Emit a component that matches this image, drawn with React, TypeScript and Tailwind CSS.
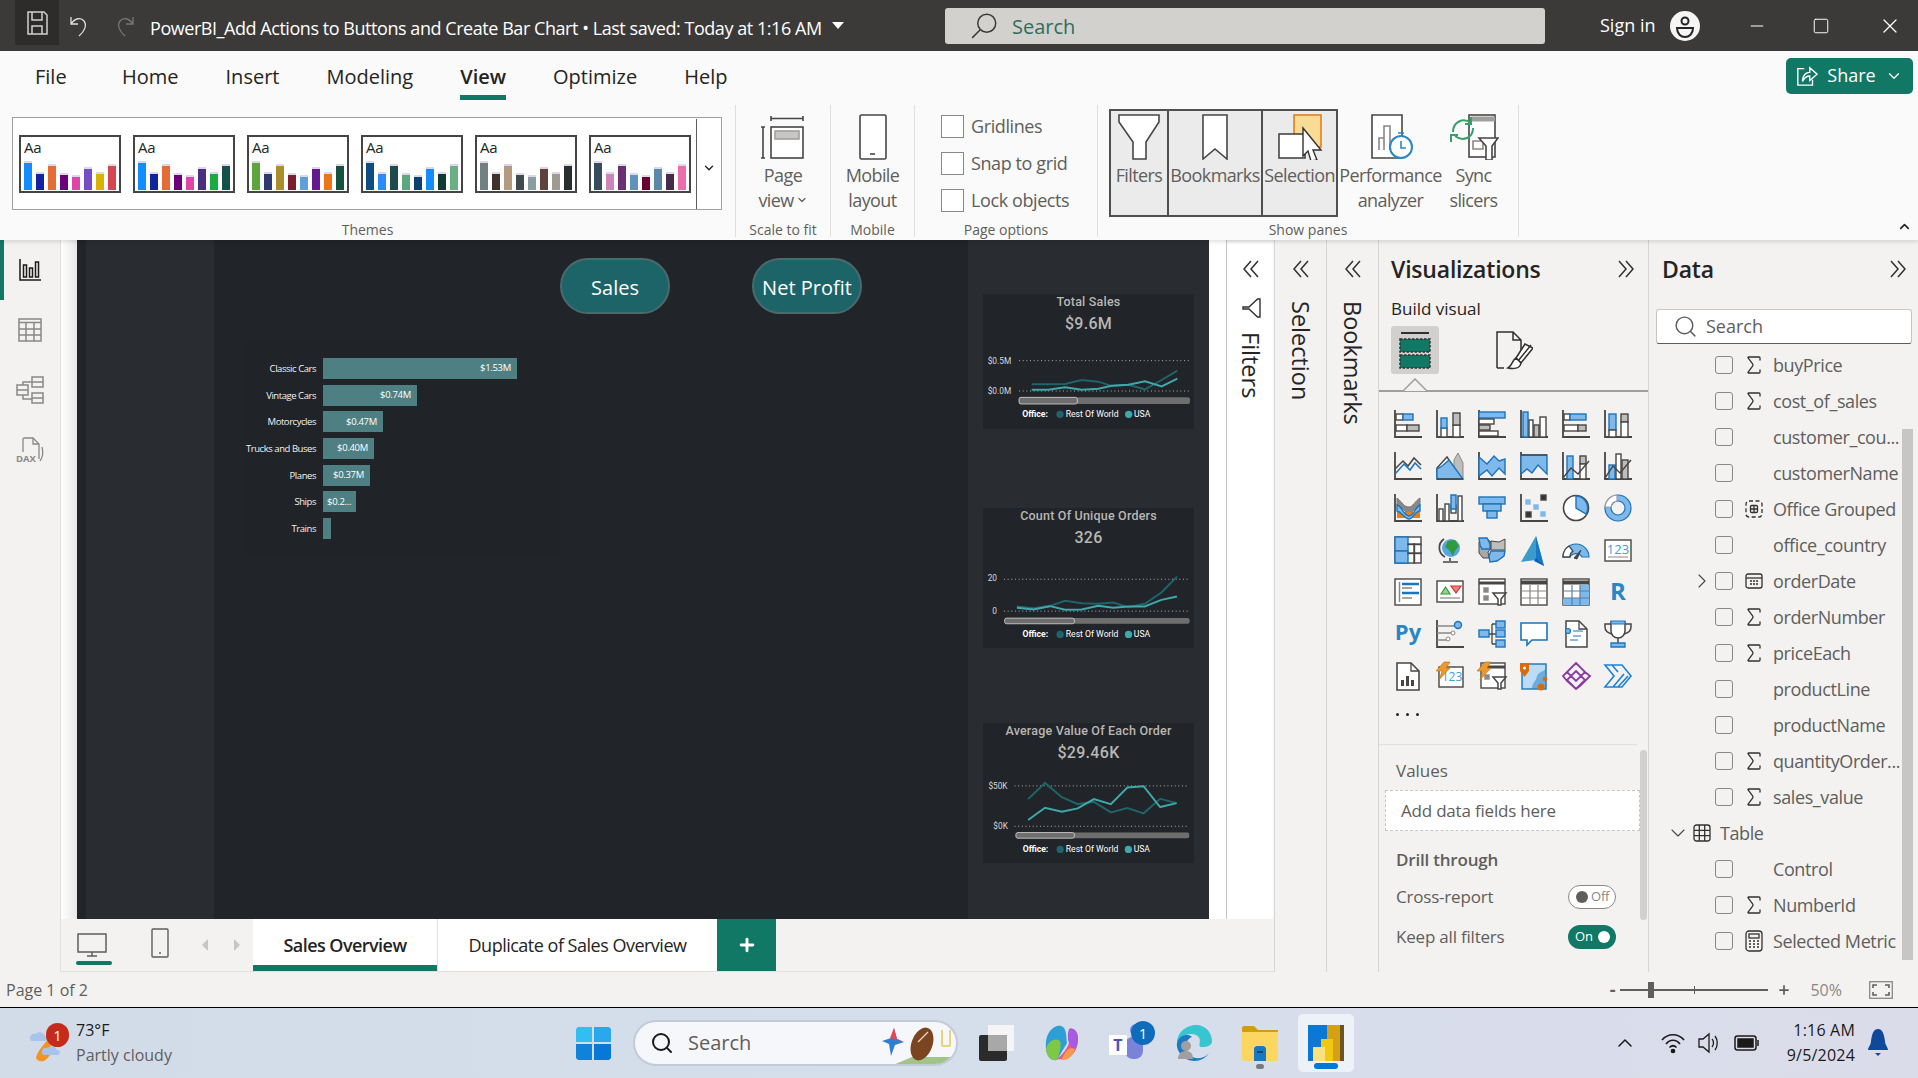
import React from 'react';
import { ChevronDown, ChevronUp, ChevronRight, Search, Plus, Minus, Square, X, Sigma } from 'lucide-react';

const D = '#484644';
const B = '#1b74bc';
const L = '#7fb8ea';
const G = '#bdbdbd';
const W = '#ffffff';

const themes = [
  ['#118dff', '#12239e', '#e66c37', '#6b007b', '#e044a7', '#744ec2', '#d9b300', '#d64550'],
  ['#118dff', '#12239e', '#e66c37', '#6b007b', '#e044a7', '#4a2f7f', '#1aab40', '#15504a'],
  ['#5ba63c', '#2f3a6e', '#ac8f2c', '#7a1f2e', '#5f9fd9', '#63188f', '#e8761c', '#16503f'],
  ['#0f4c81', '#2a8cff', '#1e4a4a', '#5aa880', '#0d3f72', '#118dff', '#113a32', '#6bb083'],
  ['#708083', '#40302e', '#b49a7f', '#414b4b', '#8a9ea2', '#60403a', '#a09b90', '#262e2e'],
  ['#374d5e', '#cc86b7', '#6b3072', '#5f93bd', '#6b0030', '#5c88a8', '#452a4a', '#ec6cae'],
];
const themeBars = [29, 18, 26, 17, 15, 23, 18, 26];

const r = (x: number, y: number, w: number, h: number, f: string, s: string = D) => (
  <rect x={x} y={y} width={w} height={h} fill={f} stroke={s} strokeWidth={1.4} />
);
const axis = <path d="M1 0V27H28" stroke={D} strokeWidth={1.8} fill="none" />;

// visualization gallery, row by row
const vizIcons: React.ReactNode[] = [
  <>{axis}{r(2, 4, 7, 6, W)}{r(9, 4, 10, 6, L, B)}{r(2, 15, 11, 6, W)}{r(13, 15, 12, 6, G)}</>,
  <>{axis}{r(5, 18, 6, 9, W)}{r(5, 8, 6, 10, L, B)}{r(17, 15, 7, 12, W)}{r(17, 3, 7, 12, G)}</>,
  <>{axis}{r(1, 2, 26, 6, L, B)}{r(1, 9, 15, 5, W)}{r(1, 15, 11, 5, G)}{r(1, 21, 19, 5, W)}</>,
  <>{axis}{r(3, 2, 5, 25, L, B)}{r(9, 10, 4, 17, W)}{r(14, 15, 5, 12, G)}{r(20, 7, 6, 20, W)}</>,
  <>{axis}{r(2, 4, 6, 6, W)}{r(8, 4, 16, 6, L, B)}{r(2, 15, 14, 6, W)}{r(16, 15, 8, 6, G)}</>,
  <>{axis}{r(5, 4, 7, 16, L, B)}{r(5, 20, 7, 7, W)}{r(17, 4, 7, 8, G)}{r(17, 12, 7, 15, W)}</>,

  <>{axis}<path d="M1 17L9 9L14 14L20 6L27 13" stroke={D} strokeWidth={1.5} fill="none" /><path d="M1 22L10 12L16 18L21 11L27 17" stroke={B} strokeWidth={1.5} fill="none" /></>,
  <><path d="M18 8L22 1L27 11V27H18Z" fill={G} stroke="#8a8886" strokeWidth={1} /><path d="M1 16L11 5L21 20V27H1Z" fill={W} stroke={D} strokeWidth={1.4} /><path d="M1 27V17L6 14L13 8L27 27Z" fill={L} stroke={B} strokeWidth={1.4} /><path d="M1 27H27" stroke={D} strokeWidth={1.6} /></>,
  <>{axis}<path d="M1 5L9 12L16 4L21 9L27 7V22L21 16L14 24L9 18L1 24Z" fill={L} stroke={B} strokeWidth={1.4} /></>,
  <>{axis}<path d="M1 3H27V22L18 13L12 21L7 17L1 22Z" fill={L} stroke={B} strokeWidth={1.4} /><path d="M1 3H27" stroke={D} strokeWidth={1.4} /></>,
  <>{axis}{r(5, 4, 6, 23, L, B)}{r(18, 4, 6, 8, G)}{r(18, 12, 6, 15, W)}<path d="M1 26L9 16L16 22L27 9" stroke={D} strokeWidth={1.4} fill="none" /></>,
  <>{axis}{r(5, 13, 6, 14, L, B)}{r(12, 2, 5, 25, W)}{r(18, 8, 6, 19, G)}<path d="M1 26L9 14L16 21L27 8" stroke={D} strokeWidth={1.4} fill="none" /></>,

  <>{axis}<path d="M3 4C9 9 10 13 15 13C19 13 21 7 26 4V11C21 13 19 19 15 19C10 19 9 12 3 11Z" fill="#8a8886" stroke="#777" strokeWidth={1} /><path d="M3 18H26V24H3Z" fill="#e3811c" /><path d="M3 11C8 12 10 22 15 22C20 22 21 13 26 11V17C21 17 19 25 15 25C10 25 8 18 3 17Z" fill={L} stroke={B} strokeWidth={1.4} /></>,
  <>{axis}{r(3, 15, 4, 12, W)}{r(9, 10, 4, 17, W)}{r(15, 11, 5, 8, W)}<path d="M15 1H20V15H15Z" fill={L} stroke={B} strokeWidth={1.4} />{r(22, 2, 4, 25, W)}</>,
  <>{r(1, 3, 26, 7, L, B)}{r(5, 10, 18, 7, L, B)}{r(9, 17, 10, 7, L, B)}</>,
  <>{axis}{r(6, 6, 4, 4, L, '#7fb8ea')}{r(21, 1, 5, 5, '#333')}{r(14, 11, 4, 4, L, '#7fb8ea')}{r(6, 18, 5, 5, '#333')}{r(21, 18, 4, 4, L, '#7fb8ea')}</>,
  <><circle cx={14} cy={14} r={12.5} fill={W} stroke={D} strokeWidth={1.6} /><path d="M14 2A12 12 0 0 1 24 20L14 14Z" fill={L} stroke={B} strokeWidth={1.4} /></>,
  <><circle cx={14} cy={14} r={10} fill="none" stroke={L} strokeWidth={6} /><circle cx={14} cy={14} r={13} fill="none" stroke={B} strokeWidth={1.2} /><circle cx={14} cy={14} r={7} fill="none" stroke={B} strokeWidth={1.2} /><path d="M1 13A13 13 0 0 1 13 1V7A7 7 0 0 0 7 13Z" fill={W} stroke="#a19f9d" strokeWidth={1.2} /></>,

  <>{r(1, 1, 26, 26, W, D)}{r(1, 1, 13, 14, L, B)}{r(1, 15, 13, 12, L, B)}{r(14, 8, 13, 0.5, W, D)}{r(20, 8, 0.5, 19, W, D)}{r(14, 17, 13, 0.5, W, D)}</>,
  <><circle cx={15} cy={12} r={9} fill="#5aa5e0" /><path d="M12 5L19 4L23 10L19 15L17 20L13 14L9 11Z" fill="#2e9b3e" /><path d="M8 3A10.5 10.5 0 0 0 9 21" stroke={D} strokeWidth={1.8} fill="none" /><path d="M14 22V25M7 26H22" stroke={D} strokeWidth={1.6} /></>,
  <><path d="M1 6L8 2L13 6L14 11L10 16L11 22L5 22L1 17Z" fill="#aaa8a6" stroke={D} strokeWidth={1} /><path d="M1 2H9L12 8L12 13L4 13L2 9Z" fill={L} stroke={B} strokeWidth={1.4} /><path d="M13 5L21 6L27 3V14L20 14L13 14Z" fill={G} stroke={D} strokeWidth={1} /><path d="M13 15H27L26 20L19 25L12 26L11 20Z" fill={L} stroke={B} strokeWidth={1.4} /></>,
  <><path d="M16 0L24 30L16 24L1 26Z" fill="#3b9ccc" /><path d="M16 0L24 30L16 24Z" fill="#1878c8" /><path d="M16 22L24 30L14 25Z" fill="#0d5fb0" /></>,
  <><path d="M1 21A13 13 0 0 1 27 21H20A7 7 0 0 0 8 21Z" fill={L} stroke={B} strokeWidth={1.2} /><path d="M1 21A13 13 0 0 1 7 10L11 15A7 7 0 0 0 8 21Z" fill={W} stroke={D} strokeWidth={1.3} /><path d="M12 22L19 14L15 23Z" fill={D} stroke={D} /></>,
  <>{r(1, 4, 26, 21, W, D)}<text x={14} y={18} textAnchor="middle" fontSize={13} fill="#3b9fe0" fontFamily="Open Sans, sans-serif">123</text><path d="M4 21H24" stroke="#8a8886" strokeWidth={1} /></>,

  <>{r(1, 1, 26, 26, W, D)}<path d="M5.5 4V24" stroke="#8a8886" strokeWidth={1.5} /><path d="M8 6H25M8 15H25" stroke={B} strokeWidth={2.4} /><path d="M8 10H18M8 20H18" stroke="#8a8886" strokeWidth={1.5} /></>,
  <>{r(1, 3, 26, 21, W, D)}<path d="M5 16L9.5 9L14 16Z" fill="#9ad08a" stroke="#2e9b3e" strokeWidth={1.2} /><path d="M15 8H25L20 15Z" fill="#f0817c" stroke="#d13438" strokeWidth={1.2} /><path d="M4 20H24" stroke="#8a8886" strokeWidth={1.2} /></>,
  <>{r(1, 1, 26, 25, W, D)}<path d="M1 5H27" stroke={D} strokeWidth={3} />{r(6, 10, 4, 4, '#8a8886', '#8a8886')}{r(6, 18, 4, 4, '#8a8886', '#8a8886')}<path d="M15 15H28L23 21V27H20V21Z" fill={W} stroke={D} strokeWidth={1.5} /></>,
  <>{r(1, 1, 26, 26, W, D)}<path d="M1 4.5H27" stroke={D} strokeWidth={4} /><path d="M10 7V27M18 7V27M1 13H27M1 20H27" stroke="#8a8886" strokeWidth={1.2} /></>,
  <>{r(1, 1, 26, 26, W, D)}<path d="M18 7H27V27H1V20H18Z" fill={L} /><path d="M1 4.5H27" stroke={D} strokeWidth={4} /><path d="M10 7V27M18 7V27M1 13H27M1 20H27" stroke="#5d7fa0" strokeWidth={1.2} /></>,
  <text x={14} y={22} textAnchor="middle" fontSize={24} fontWeight={700} fill="#2a86c5" fontFamily="Open Sans, sans-serif">R</text>,

  <text x={14} y={20} textAnchor="middle" fontSize={22} fontWeight={700} fill="#2a86c5" fontFamily="Open Sans, sans-serif">Py</text>,
  <>{axis}<path d="M1 6H20M1 13H16M1 20H12" stroke="#8a8886" strokeWidth={1.3} /><circle cx={22} cy={5} r={3.5} fill={L} stroke={B} strokeWidth={1.4} /><circle cx={17} cy={13} r={2} fill={W} stroke="#8a8886" /><circle cx={12} cy={19} r={2} fill={W} stroke="#8a8886" /></>,
  <><path d="M10 14H14M14 4V24M14 4H18M14 14H18M14 24H18" stroke={D} strokeWidth={1.3} />{r(1, 10, 10, 7, L, B)}{r(18, 1, 9, 7, L, B)}{r(18, 10, 9, 7, L, B)}{r(18, 20, 9, 7, L, B)}</>,
  <path d="M1 3H27V20H12L7 25V20H1Z" fill={W} stroke={B} strokeWidth={1.6} />,
  <><path d="M4 1H17L25 9V27H4Z" fill={W} stroke={D} strokeWidth={1.5} /><path d="M17 1V9H25" fill="none" stroke={D} strokeWidth={1.3} /><circle cx={6} cy={11} r={2.5} fill={L} stroke={B} strokeWidth={1.2} /><path d="M11 11H21M11 16H19M8 20H16" stroke={B} strokeWidth={1.1} /></>,
  <><path d="M7 2H21V11A7 7 0 0 1 7 11Z" fill={W} stroke={D} strokeWidth={1.5} /><path d="M7 4H1V7C1 11 4 13 8 14M21 4H27V7C27 11 24 13 20 14M14 18V23" stroke={D} strokeWidth={1.5} fill="none" /><path d="M7 1H21V4H7Z" fill={L} stroke={B} strokeWidth={1.2} /><path d="M7 23H21V27H7Z" fill={L} stroke={B} strokeWidth={1.3} /></>,

  <><path d="M3 1H17L25 9V28H3Z" fill={W} stroke={D} strokeWidth={1.6} /><path d="M17 1V9H25" fill="none" stroke={D} strokeWidth={1.3} /><path d="M7 24V18H10V24ZM12 24V14H15V24ZM17 24V18H20V24Z" fill={D} /></>,
  <>{r(3, 5, 24, 20, W, D)}<text x={16} y={19} textAnchor="middle" fontSize={12} fill="#3b9fe0" fontFamily="Open Sans, sans-serif">123</text><path d="M8 0H14L10 6H14L3 18L6 9H0Z" fill="#ed9a2c" stroke="#b86e12" strokeWidth={0.6} /></>,
  <>{r(3, 1, 24, 25, W, D)}<path d="M3 5H27" stroke={D} strokeWidth={3} />{r(7, 13, 4, 4, '#8a8886', '#8a8886')}<path d="M15 15H28L23 21V27H20V21Z" fill={W} stroke={D} strokeWidth={1.5} /><path d="M7 0H13L9 6H13L2 18L5 9H-1Z" fill="#ed9a2c" stroke="#b86e12" strokeWidth={0.6} /></>,
  <>{r(2, 2, 24, 25, '#bcdcf5', B)}<path d="M12 27C12 20 16 20 17 14C18 10 24 10 26 6V27Z" fill="#2a86c5" opacity={0.55} /><path d="M0 1H9V9L4.5 15L0 9Z" fill="#d96b0b" /><circle cx={4.5} cy={6} r={1.5} fill={W} /><circle cx={25} cy={17} r={2.3} fill="#d96b0b" /><circle cx={21} cy={25} r={3.5} fill="#d96b0b" /></>,
  <path d="M9 6L14 1L23 10L28 14L19 23L14 27L5 19L1 14ZM14 1L23 10L14 19L5 10ZM14 9L23 18L14 27L5 18Z" fill="none" stroke="#8a3aa3" strokeWidth={1.8} />,
  <path d="M1 3H18L27 14L18 25H1L10 14ZM9 25L20 12M14 25L24 14M8 3L14 10" fill="none" stroke="#1b82d8" strokeWidth={1.6} />,
];

const fields: { name: string; icon?: 'sum' | 'group' | 'date' | 'calc'; expand?: boolean }[] = [
  { name: 'buyPrice', icon: 'sum' },
  { name: 'cost_of_sales', icon: 'sum' },
  { name: 'customer_cou...' },
  { name: 'customerName' },
  { name: 'Office Grouped', icon: 'group' },
  { name: 'office_country' },
  { name: 'orderDate', icon: 'date', expand: true },
  { name: 'orderNumber', icon: 'sum' },
  { name: 'priceEach', icon: 'sum' },
  { name: 'productLine' },
  { name: 'productName' },
  { name: 'quantityOrder...', icon: 'sum' },
  { name: 'sales_value', icon: 'sum' },
];
const tableFields: { name: string; icon?: 'sum' | 'calc' }[] = [
  { name: 'Control' },
  { name: 'NumberId', icon: 'sum' },
  { name: 'Selected Metric', icon: 'calc' },
];

const bars = [
  { label: 'Classic Cars', value: '$1.53M', w: 194 },
  { label: 'Vintage Cars', value: '$0.74M', w: 94 },
  { label: 'Motorcycles', value: '$0.47M', w: 60 },
  { label: 'Trucks and Buses', value: '$0.40M', w: 51 },
  { label: 'Planes', value: '$0.37M', w: 47 },
  { label: 'Ships', value: '$0.2...', w: 33 },
  { label: 'Trains', value: '', w: 8 },
];

const DoubleChevron = ({ left, className = '' }: { left?: boolean; className?: string }) => (
  <svg viewBox="0 0 20 20" className={`h-5 w-5 ${className}`} fill="none" stroke="#323130" strokeWidth={1.5}>
    <path d={left ? 'M10 2L3 10L10 18M17 2L10 10L17 18' : 'M3 2L10 10L3 18M10 2L17 10L10 18'} />
  </svg>
);

const ThemeThumb = ({ colors }: { colors: string[] }) => (
  <div className="flex h-[58px] w-[102px] flex-col border-2 border-[#454545] bg-white pl-[3px]">
    <div className="h-[20px] text-[15px] leading-[20px] tracking-[-0.2px] text-[#252423]">Aa</div>
    <div className="flex h-[33px] items-end gap-[4px]">
      {colors.map((c, i) => (
        <div
          key={i}
          className="w-[8px] border-t-2 border-t-[#dcd8ec]"
          style={{ backgroundColor: c, height: themeBars[i] }}
        />
      ))}
    </div>
  </div>
);

const Sep = () => <div className="h-[132px] w-px shrink-0 bg-[#e1dfdd]" />;

const Group = ({ label, width, children }: { label: string; width: string; children: React.ReactNode }) => (
  <div className={`flex h-[135px] shrink-0 flex-col ${width}`}>
    <div className="h-[115px]">{children}</div>
    <div className="h-[20px] text-center text-[14px] leading-[20px] text-[#605e5c]">{label}</div>
  </div>
);

const PageCheck = ({ label }: { label: string }) => (
  <div className="flex h-[22px] items-center gap-[7px]">
    <div className="h-[23px] w-[23px] border border-[#8a8886] bg-white" />
    <span className="text-[18px] tracking-[-0.4px] text-[#605e5c]">{label}</span>
  </div>
);

const PaneLabel = ({ lines }: { lines: string[] }) => (
  <div className="mt-[3px] text-center text-[18px] leading-[24.5px] tracking-[-0.6px] text-[#605e5c]">
    {lines.map((l) => (
      <div key={l} className="whitespace-nowrap">
        {l}
      </div>
    ))}
  </div>
);

const PaneToggle = ({ width, label, children }: { width: string; label: string; children: React.ReactNode }) => (
  <div className={`flex h-[108px] flex-col items-center border-2 border-[#505050] bg-[#ebebeb] pt-[3px] ${width} -ml-[2px] first:ml-0`}>
    <div className="h-[46px]">{children}</div>
    <PaneLabel lines={[label]} />
  </div>
);

const Spark = ({
  viewBox,
  height,
  grid,
  labels,
  dark,
  light,
  bar,
  legendY,
}: {
  viewBox: string;
  height: number;
  grid: [number, number, number];
  labels: [string, number, number][];
  dark: string;
  light: string;
  bar: [number, number, number, number];
  legendY: number;
}) => (
  <svg viewBox={viewBox} width={211} height={height} className="block" fontFamily="Roboto, sans-serif">
    <path
      d={`M${grid[0]} ${grid[1]}H660M${grid[0]} ${grid[2]}H660`}
      stroke="#b3b0ad"
      strokeWidth={3}
      strokeDasharray="3 8"
    />
    {labels.map(([t, x, y]) => (
      <text key={t} x={x} y={y + 9} fontSize={25} fill="#d9d9d9">
        {t}
      </text>
    ))}
    <polyline points={dark} fill="none" stroke="#1f6468" strokeWidth={6} />
    <polyline points={light} fill="none" stroke="#3fa8ab" strokeWidth={6} />
    <rect x={bar[0]} y={bar[1]} width={660 - bar[0]} height={bar[2]} rx={6} fill="#6e6e6e" />
    <rect x={bar[0]} y={bar[1]} width={bar[3] - bar[0]} height={bar[2]} rx={6} fill="#6e6e6e" stroke="#d2d0ce" strokeWidth={2.5} />
    <text x={157} y={legendY + 9} fontSize={26} fontWeight={700} fill="#ffffff">
      Office:
    </text>
    <circle cx={270} cy={legendY} r={11} fill="#1f6468" />
    <text x={287} y={legendY + 9} fontSize={26} fill="#ffffff">
      Rest Of World
    </text>
    <circle cx={476} cy={legendY} r={11} fill="#3fa8ab" />
    <text x={492} y={legendY + 9} fontSize={26} fill="#ffffff">
      USA
    </text>
  </svg>
);

const KpiCard = ({ title, value, children, h }: { title: string; value: string; children: React.ReactNode; h: string }) => (
  <div className={`w-[211px] bg-[#212429] font-['Roboto',sans-serif] ${h}`}>
    <div className="h-[50px] text-center font-medium text-[#b9b6b3]">
      <div className="text-[12.5px] leading-[16px] tracking-[0.2px]">{title}</div>
      <div className="mt-[3px] text-[16px] leading-[22px] tracking-[0.3px]">{value}</div>
    </div>
    {children}
  </div>
);

const Toggle = ({ on }: { on?: boolean }) =>
  on ? (
    <div className="flex h-[24px] w-[48px] items-center justify-between rounded-full bg-[#117865] pl-[7px] pr-[6px] text-[13px] text-white">
      On
      <div className="h-[12px] w-[12px] rounded-full bg-white" />
    </div>
  ) : (
    <div className="flex h-[24px] w-[48px] items-center gap-[3px] rounded-full border border-[#8a8886] bg-white pl-[7px] text-[13px] text-[#8a8886]">
      <div className="h-[12px] w-[12px] rounded-full bg-[#605e5c]" />
      Off
    </div>
  );

const FieldIcon = ({ icon }: { icon?: string }) => {
  if (icon === 'sum') return <Sigma className="h-[24px] w-[24px] shrink-0" color="#323130" strokeWidth={1.3} />;
  if (icon === 'group')
    return (
      <svg viewBox="0 0 18 18" className="h-[18px] w-[18px]" fill="none" stroke="#323130" strokeWidth={1.3}>
        <rect x={1} y={1} width={16} height={16} rx={3} strokeDasharray="4 2.5" />
        <rect x={5.5} y={5.5} width={7} height={7} rx={1.2} />
        <path d="M9 5.5V12.5M5.5 9H12.5" />
      </svg>
    );
  if (icon === 'date')
    return (
      <svg viewBox="0 0 18 18" className="h-[18px] w-[18px]" fill="none" stroke="#323130" strokeWidth={1.3}>
        <rect x={1} y={2} width={16} height={14} rx={2} />
        <path d="M1 6H17" />
        <path d="M5 9H7M8 9H10M11 9H13M5 12H7M8 12H10M11 12H13" strokeWidth={1.5} />
      </svg>
    );
  if (icon === 'calc')
    return (
      <svg viewBox="0 0 18 22" className="h-[22px] w-[18px]" fill="none" stroke="#323130" strokeWidth={1.3}>
        <rect x={1} y={1} width={16} height={20} rx={3} />
        <rect x={4} y={4} width={10} height={4} />
        <path d="M4 11H6M8 11H10M12 11H14M4 14H6M8 14H10M12 14H14M4 17H6M8 17H10M12 17H14" strokeWidth={1.6} />
      </svg>
    );
  return null;
};

const FieldRow = ({ name, icon, expand }: { name: string; icon?: string; expand?: boolean }) => (
  <div className="flex h-[36px] items-center">
    <div className="flex w-[66px] justify-end pr-[1px]">
      {expand && <ChevronRight className="h-[24px] w-[24px]" color="#484644" strokeWidth={1.1} />}
    </div>
    <div className="h-[18px] w-[18px] rounded-[3px] border border-[#8a8886]" />
    <div className="ml-[12px] flex w-[18px] justify-center">
      <FieldIcon icon={icon} />
    </div>
    <span className="ml-[10px] whitespace-nowrap text-[18px] tracking-[-0.4px] text-[#605e5c]">{name}</span>
  </div>
);

export default function App() {
  return (
    <div className="flex h-[1078px] w-[1918px] flex-col overflow-hidden bg-white font-['Open_Sans',sans-serif]">
      {/* Title bar */}
      <div className="flex h-[51px] shrink-0 items-center bg-[#3b3a39] text-white">
        <div className="flex w-[945px] items-center">
          <div className="ml-[15px] flex h-[45px] w-[44px] -translate-y-[3px] items-center justify-center bg-[#2d2c2b]">
            <svg viewBox="0 0 22 24" className="h-[24px] w-[22px]" fill="none" stroke="#d2d0ce" strokeWidth={1.5}>
              <path d="M2 1H18L21 4V23H2Z" />
              <path d="M6 1V9H16V1M6 23V15H16V23" />
            </svg>
          </div>
          <svg viewBox="0 0 22 24" className="ml-[10px] h-[24px] w-[22px]" fill="none" stroke="#e1dfdd" strokeWidth={1.3}>
            <path d="M2 3V10H9M2 10C6 4 12 3 15 7C18 11 16 17 10 22" />
          </svg>
          <svg viewBox="0 0 22 24" className="ml-[22px] h-[24px] w-[22px]" fill="none" stroke="#797775" strokeWidth={1.3}>
            <path d="M20 3V10H13M20 10C16 4 10 3 7 7C4 11 6 17 12 22" />
          </svg>
          <span className="ml-[15px] translate-y-[3px] whitespace-nowrap text-[18px] tracking-[-0.45px]">
            PowerBI_Add Actions to Buttons and Create Bar Chart • Last saved: Today at 1:16 AM
          </span>
          <div className="ml-[10px] h-0 w-0 border-x-[6px] border-t-[7px] border-x-transparent border-t-white" />
        </div>
        <div className="flex h-[36px] w-[600px] items-center rounded-[3px] bg-[#d2d1ce] pl-[26px]">
          <svg viewBox="0 0 24 24" className="h-[27px] w-[27px]" fill="none" stroke="#3b3a39" strokeWidth={1.3}>
            <circle cx={14} cy={10} r={8} />
            <path d="M8 16L1 23" />
          </svg>
          <span className="ml-[14px] translate-y-[1px] text-[20px] text-[#2f6d60]">Search</span>
        </div>
        <span className="ml-[55px] whitespace-nowrap text-[18px]">Sign in</span>
        <svg viewBox="0 0 30 30" className="ml-[14px] h-[30px] w-[30px]">
          <circle cx={15} cy={15} r={15} fill="#f5f5f5" />
          <circle cx={15} cy={10} r={3.5} fill="none" stroke="#252423" strokeWidth={2} />
          <path d="M7 17H23C23 23 19 26 15 26C11 26 7 23 7 17Z" fill="none" stroke="#252423" strokeWidth={2} />
        </svg>
        <Minus className="ml-[47px] h-[20px] w-[20px]" strokeWidth={1.3} />
        <Square className="ml-[45px] h-[18px] w-[18px]" strokeWidth={1.3} />
        <X className="ml-[48px] h-[24px] w-[24px]" strokeWidth={1.3} />
      </div>

      {/* Ribbon */}
      <div className="relative z-10 h-[189px] shrink-0 bg-[#fafafa] shadow-[0_2px_4px_rgba(0,0,0,0.12)]">
        <div className="flex h-[54px] items-center pb-[3px] pl-[35px] text-[20px] text-[#252423]">
          <span className="w-[87px]">File</span>
          <div className="flex gap-[47px]">
            {['Home', 'Insert', 'Modeling', 'View', 'Optimize', 'Help'].map((t) =>
              t === 'View' ? (
                <span key={t} className="relative font-semibold">
                  {t}
                  <span className="absolute -bottom-[8px] left-0 h-[5px] w-full bg-[#117865]" />
                </span>
              ) : (
                <span key={t}>{t}</span>
              ),
            )}
          </div>
          <button
            type="button"
            className="ml-auto mr-[5px] flex h-[36px] w-[127px] -translate-y-[1px] items-center justify-center gap-[9px] rounded-[5px] bg-[#117865] text-[18px] text-white"
          >
            <svg viewBox="0 0 24 24" className="h-[22px] w-[22px]" fill="none" stroke="#fff" strokeWidth={1.5}>
              <path d="M9 4H2V22H18V16" />
              <path d="M7 18C7 11 11 8 15 8V3L23 10L15 17V12C11 12 9 14 7 18Z" />
            </svg>
            Share
            <ChevronDown className="h-[18px] w-[18px]" strokeWidth={1.6} />
          </button>
        </div>

        <div className="flex items-start">
          <Group label="Themes" width="w-[735px]">
            <div className="ml-[12px] mt-[12px] flex h-[93px] w-[710px] items-center border border-[#a19f9d] bg-white pl-[6px]">
              <div className="flex gap-[12px]">
                {themes.map((t, i) => (
                  <ThemeThumb key={i} colors={t} />
                ))}
              </div>
              <div className="ml-[5px] h-[90px] w-px bg-[#605e5c]" />
              <div className="flex flex-1 justify-center pt-[8px]">
                <ChevronDown className="h-[14px] w-[14px]" color="#252423" strokeWidth={2.4} />
              </div>
            </div>
          </Group>
          <Sep />
          <Group label="Scale to fit" width="w-[94px]">
            <div className="flex flex-col items-center pt-[9px]">
              <svg viewBox="0 0 46 46" className="h-[46px] w-[46px]" fill="none" stroke="#484644" strokeWidth={1.6}>
                <path d="M11 2V7M43 2V7M11 4.5H43M1 13H5M1 44H5M3 13V44" />
                <rect x={11} y={13} width={32} height={31} fill="#fff" />
                <rect x={15} y={17} width={24} height={8} fill="#c8c6c4" stroke="#a19f9d" />
              </svg>
              <PaneLabel lines={['Page']} />
              <div className="flex items-center gap-[2px] text-[18px] leading-[24.5px] tracking-[-0.6px] text-[#605e5c]">
                view
                <ChevronDown className="h-[12px] w-[12px]" strokeWidth={2.4} />
              </div>
            </div>
          </Group>
          <Sep />
          <Group label="Mobile" width="w-[83px]">
            <div className="flex flex-col items-center pt-[9px]">
              <svg viewBox="0 0 46 46" className="h-[46px] w-[46px]" fill="none" stroke="#484644" strokeWidth={1.6}>
                <rect x={10} y={1} width={26} height={44} rx={1.5} fill="#fff" />
                <path d="M20 40H25" />
              </svg>
              <PaneLabel lines={['Mobile', 'layout']} />
            </div>
          </Group>
          <Sep />
          <Group label="Page options" width="w-[182px]">
            <div className="flex flex-col gap-[15px] pl-[26px] pt-[10px]">
              <PageCheck label="Gridlines" />
              <PageCheck label="Snap to grid" />
              <PageCheck label="Lock objects" />
            </div>
          </Group>
          <Sep />
          <Group label="Show panes" width="w-[420px]">
            <div className="flex pl-[11px] pt-[4px]">
              <PaneToggle width="w-[60px]" label="Filters">
                <svg viewBox="0 0 42 46" className="h-[46px] w-[42px]" fill="none" stroke="#484644" strokeWidth={1.6}>
                  <path d="M1 1H41V8L28 28V45H15V28L1 8Z" fill="#fff" />
                </svg>
              </PaneToggle>
              <PaneToggle width="w-[96px]" label="Bookmarks">
                <svg viewBox="0 0 28 46" className="h-[46px] w-[28px]" fill="none" stroke="#484644" strokeWidth={1.6}>
                  <path d="M2 1H26V45L14 35L2 45Z" fill="#fff" />
                </svg>
              </PaneToggle>
              <PaneToggle width="w-[77px]" label="Selection">
                <svg viewBox="0 0 46 46" className="h-[46px] w-[46px]" fill="none" stroke="#484644" strokeWidth={1.6}>
                  <rect x={17} y={1} width={27} height={32} fill="#f8dc95" stroke="#e3811c" />
                  <rect x={2} y={20} width={26} height={24} fill="#fff" />
                  <path d="M26 14L44 36H36L40 46L34 47L31 37L26 42Z" fill="#fff" stroke="#323130" strokeWidth={1.4} />
                </svg>
              </PaneToggle>
              <div className="flex w-[105px] flex-col items-center pt-[5px]">
                <svg viewBox="0 0 46 46" className="h-[46px] w-[46px]" fill="none" stroke="#484644" strokeWidth={1.6}>
                  <path d="M4 1H34V44H4Z" fill="#fff" />
                  <path d="M11 36V24H16V36M16 36V12H22V36" stroke="#8a8886" />
                  <circle cx={33} cy={33} r={11} fill="#fff" stroke="#2a86c5" strokeWidth={2} />
                  <path d="M33 27V34H38M30 19H36" stroke="#2a86c5" strokeWidth={1.6} />
                </svg>
                <PaneLabel lines={['Performance', 'analyzer']} />
              </div>
              <div className="flex w-[61px] flex-col items-center pt-[5px]">
                <svg viewBox="0 0 50 46" className="h-[46px] w-[50px]" fill="none" stroke="#484644" strokeWidth={1.6}>
                  <rect x={20} y={1} width={26} height={42} fill="#fff" />
                  <path d="M22 5H46" stroke="#a19f9d" strokeWidth={5} />
                  <path d="M24 27H34V35H24Z" stroke="#8a8886" />
                  <path d="M4 18C4 8 14 3 22 9M24 14C24 24 14 28 6 22M22 3V10H16M2 28V21H9" stroke="#38a169" strokeWidth={2} />
                  <path d="M30 24H49L43 32V46H37V32Z" fill="#fff" />
                </svg>
                <PaneLabel lines={['Sync', 'slicers']} />
              </div>
            </div>
          </Group>
          <Sep />
        </div>
        <ChevronUp className="absolute bottom-[6px] right-[6px] h-[15px] w-[15px]" color="#252423" strokeWidth={2.6} />
      </div>

      {/* Main */}
      <div className="flex h-[732px] shrink-0 bg-[#f3f2f1]">
        {/* Left nav */}
        <div className="flex w-[61px] shrink-0 flex-col border-r border-[#e1dfdd]">
          <div className="flex h-[60px] items-center justify-center border-l-4 border-[#117865] pr-[4px]">
            <svg viewBox="0 0 22 22" className="h-[22px] w-[22px]" fill="none" stroke="#1b1a19" strokeWidth={1.5}>
              <path d="M1 0V21H22" />
              <rect x={4.5} y={6} width={3} height={12} />
              <rect x={10.5} y={9} width={3} height={9} />
              <rect x={16.5} y={3} width={3} height={15} />
            </svg>
          </div>
          <div className="flex h-[60px] items-center justify-center">
            <svg viewBox="0 0 24 24" className="h-[24px] w-[24px]" fill="none" stroke="#8a8886" strokeWidth={1.5}>
              <rect x={1} y={1} width={22} height={22} />
              <path d="M1 4.5H23M1 11H23M1 17H23M8 4.5V23M16 4.5V23" />
            </svg>
          </div>
          <div className="flex h-[60px] items-center justify-center">
            <svg viewBox="0 0 28 28" className="h-[28px] w-[28px]" fill="none" stroke="#8a8886" strokeWidth={1.5}>
              <rect x={1} y={9} width={11} height={10} />
              <path d="M1 14H12M12 6H16M12 23H16M7 9V6H16M7 19V23H16" />
              <rect x={16} y={1} width={11} height={10} />
              <path d="M16 6H27M16 22H27" />
              <rect x={16} y={17} width={11} height={10} />
            </svg>
          </div>
          <div className="flex h-[60px] items-center justify-center">
            <svg viewBox="0 0 28 26" className="h-[26px] w-[28px] overflow-visible" fill="none" stroke="#8a8886" strokeWidth={1.3}>
              <path d="M7 15V2C7 1 8 1 9 1H17L23 7V22" />
              <path d="M17 1V7H23M26 10C27 14 27 20 24 24" />
              <text x={0} y={25} fontSize={9.5} fontWeight={700} fill="#8a8886" stroke="none" fontFamily="Open Sans, sans-serif">
                DAX
              </text>
            </svg>
          </div>
        </div>

        {/* Report area + page tabs */}
        <div className="flex w-[1213px] shrink-0 flex-col">
          <div className="flex h-[679px] bg-white shadow-[inset_0_2px_3px_rgba(0,0,0,0.08)]">
            <div className="w-[16px] shrink-0 bg-linear-to-l from-[#e8e8e8] to-white" />
            <div className="flex w-[1132px] shrink-0 bg-[#212529]">
              <div className="w-[9px] shrink-0" />
              <div className="w-[128px] shrink-0 bg-[#292c31]" />
              <div className="w-[754px] shrink-0">
                <div className="ml-[346px] mt-[18px] flex gap-[82px]">
                  <div className="flex h-[56px] w-[110px] items-center justify-center rounded-full border-2 border-[#4b6a6d] bg-[#1c6468] pt-[3px] text-[20px] text-white">
                    Sales
                  </div>
                  <div className="flex h-[56px] w-[110px] items-center justify-center rounded-full border-2 border-[#4b6a6d] bg-[#1c6468] pt-[3px] text-[20px] text-white">
                    Net Profit
                  </div>
                </div>
                {/* Bar chart */}
                <div className="ml-[31px] mt-[26px] flex h-[215px] w-[316px] flex-col gap-[5.67px] bg-[#202327] pt-[18px]">
                  {bars.map((b) => (
                    <div key={b.label} className="flex h-[21px] items-center">
                      <div className="w-[71px] whitespace-nowrap pt-px text-right text-[9.5px] tracking-[-0.45px] text-[#f3f2f1]">{b.label}</div>
                      <div
                        className={`ml-[7px] flex h-[21px] items-center overflow-hidden bg-[#4e7f82] text-[9.5px] tracking-[-0.3px] text-white ${
                          b.value === '$0.2...' ? 'justify-start pl-[4px]' : 'justify-end pr-[6px]'
                        }`}
                        style={{ width: b.w }}
                      >
                        {b.value}
                      </div>
                    </div>
                  ))}
                </div>
              </div>
              <div className="w-[241px] shrink-0 bg-[#292c31] pl-[15px] pt-[54px]">
                <KpiCard title="Total Sales" value="$9.6M" h="h-[135px]">
                  <Spark
                    viewBox="39 192 633 255"
                    height={85}
                    grid={[147, 242, 333]}
                    labels={[
                      ['$0.5M', 53, 242],
                      ['$0.0M', 53, 333],
                    ]}
                    dark="185,313 235,313 285,312 335,300 385,305 425,318 475,314 525,328 575,300 622,272"
                    light="185,329 235,329 285,322 335,329 385,326 425,317 475,314 525,304 575,319 622,296"
                    bar={[147, 352, 20, 322]}
                    legendY={403}
                  />
                </KpiCard>
                <div className="mt-[79px]">
                  <KpiCard title="Count Of Unique Orders" value="326" h="h-[140px]">
                    <Spark
                      viewBox="39 834 633 271"
                      height={90}
                      grid={[101, 898, 994]}
                      labels={[
                        ['20', 52, 895],
                        ['0', 66, 994],
                      ]}
                      dark="140,980 190,985 240,978 285,963 335,970 385,972 430,968 475,982 525,972 575,938 622,890"
                      light="140,984 190,989 240,979 285,990 335,989 385,978 430,984 475,980 525,980 575,960 622,950"
                      bar={[103, 1015, 17, 313]}
                      legendY={1064}
                    />
                  </KpiCard>
                </div>
                <div className="mt-[75px]">
                  <KpiCard title="Average Value Of Each Order" value="$29.46K" h="h-[140px]">
                    <Spark
                      viewBox="39 218 633 272"
                      height={90}
                      grid={[132, 257, 379]}
                      labels={[
                        ['$50K', 53, 257],
                        ['$0K', 68, 377],
                      ]}
                      dark="173,297 224,248 275,291 323,312 372,305 423,337 473,324 522,340 572,296 622,309"
                      light="173,360 224,323 275,335 323,325 372,297 423,312 473,262 522,258 572,321 622,309"
                      bar={[136, 398, 17, 313]}
                      legendY={449}
                    />
                  </KpiCard>
                </div>
              </div>
            </div>
            <div className="w-[17px] shrink-0 bg-white" />
            {/* Filters pane, collapsed */}
            <div className="flex w-[48px] shrink-0 flex-col items-center border-l border-[#c8c6c4] pt-[19px]">
              <DoubleChevron left />
              <svg viewBox="0 0 20 20" className="mt-[19px] h-[20px] w-[20px]" fill="none" stroke="#323130" strokeWidth={1.4}>
                <path d="M19 1V19H16.5L8 11H2V9H8L16.5 1Z" />
              </svg>
              <div className="mt-[14px] text-[23.5px] font-medium leading-none text-[#252423] [writing-mode:vertical-rl]">Filters</div>
            </div>
          </div>

          {/* Page tabs */}
          <div className="flex h-[53px] items-stretch border-b border-[#e1dfdd]">
            <div className="relative flex w-[192px] items-center">
              <svg viewBox="0 0 30 24" className="ml-[16px] h-[24px] w-[30px]" fill="none" stroke="#605e5c" strokeWidth={1.5}>
                <rect x={1} y={1} width={28} height={18} />
                <path d="M15 19V23M10 23H20" />
              </svg>
              <svg viewBox="0 0 18 30" className="ml-[44px] h-[30px] w-[18px] -translate-y-[2px]" fill="none" stroke="#605e5c" strokeWidth={1.4}>
                <rect x={1} y={1} width={16} height={28} rx={1} />
                <path d="M8 25H10" />
              </svg>
              <div className="ml-[33px] h-0 w-0 border-y-[6px] border-r-[6px] border-y-transparent border-r-[#c8c6c4]" />
              <div className="ml-[26px] h-0 w-0 border-y-[6px] border-l-[6px] border-y-transparent border-l-[#c8c6c4]" />
              <div className="absolute bottom-[6px] left-[15px] h-[4px] w-[36px] rounded-full bg-[#117865]" />
            </div>
            <div className="flex w-[184px] items-center justify-center border-b-[6px] border-[#117865] bg-white pt-[6px] text-[18px] font-semibold tracking-[-0.55px] text-[#252423]">
              Sales Overview
            </div>
            <div className="flex w-[280px] items-center justify-center border-l border-[#e1dfdd] bg-white text-[18px] tracking-[-0.5px] text-[#252423]">
              Duplicate of Sales Overview
            </div>
            <div className="flex w-[59px] items-center justify-center bg-[#117865]">
              <Plus className="h-[20px] w-[20px]" color="#fff" strokeWidth={3.5} />
            </div>
          </div>
        </div>

        {/* Selection pane, collapsed */}
        <div className="flex w-[52px] shrink-0 flex-col items-center border-l border-[#d8d6d4] pt-[19px]">
          <DoubleChevron left />
          <div className="mt-[22px] text-[23.5px] font-medium leading-none text-[#252423] [writing-mode:vertical-rl]">Selection</div>
        </div>
        {/* Bookmarks pane, collapsed */}
        <div className="flex w-[52px] shrink-0 flex-col items-center border-l border-[#d8d6d4] pt-[19px]">
          <DoubleChevron left />
          <div className="mt-[22px] text-[23.5px] font-medium leading-none text-[#252423] [writing-mode:vertical-rl]">Bookmarks</div>
        </div>

        {/* Visualizations */}
        <div className="relative w-[271px] shrink-0 border-x border-[#d8d6d4]">
          <div className="flex h-[58px] items-center justify-between pl-[12px] pr-[12px]">
            <span className="text-[23px] font-semibold tracking-[-0.2px] text-[#252423]">Visualizations</span>
            <DoubleChevron />
          </div>
          <div className="h-[22px] pl-[12px] text-[17px] leading-[22px] font-medium text-[#252423]">Build visual</div>
          <div className="ml-[12px] mt-[6px] flex h-[48px] items-center">
            <div className="flex h-[48px] w-[48px] items-center justify-center rounded-[3px] bg-[#d2d0ce]">
              <svg viewBox="0 0 36 40" className="h-[40px] w-[36px]">
                <path d="M4 3H32" stroke="#323130" strokeWidth={2} />
                <rect x={3} y={9} width={30} height={13} fill="#117865" stroke="#323130" strokeWidth={1.5} strokeDasharray="2.5 1.5" />
                <rect x={3} y={25} width={30} height={13} fill="#117865" stroke="#323130" strokeWidth={1.5} strokeDasharray="2.5 1.5" />
              </svg>
            </div>
            <svg viewBox="0 0 38 40" className="ml-[56px] h-[40px] w-[38px]" fill="none" stroke="#323130" strokeWidth={1.5}>
              <path d="M2 38V2H18L26 10V20M18 2V10H26M2 38H9" />
              <path d="M36 15L23 31M30 14L21 28L26 33L38 18Z" fill="#fff" />
              <path d="M21 28C17 30 18 35 13 38C18 39 25 39 26 33Z" fill="#fff" />
            </svg>
          </div>
          <div className="relative mt-[16px] h-[2px] bg-[#a19f9d]">
            <svg viewBox="0 0 24 13" className="absolute -top-[12px] left-[24px] h-[13px] w-[24px]">
              <path d="M0 13L12 1L24 13Z" fill="#f3f2f1" />
              <path d="M0 13L12 1L24 13" fill="none" stroke="#a19f9d" strokeWidth={1.5} />
            </svg>
          </div>
          <div className="ml-[15px] mt-[18px] grid grid-cols-[repeat(6,42px)] grid-rows-[repeat(7,42px)]">
            {vizIcons.map((ic, i) => (
              <svg key={i} viewBox="0 0 28 28" className="h-[28px] w-[28px] overflow-visible" fill="none">
                {ic}
              </svg>
            ))}
          </div>
          <div className="ml-[17px] flex h-[20px] items-center gap-[5px]">
            <div className="h-[3px] w-[3px] rounded-full bg-[#252423]" />
            <div className="ml-[2px] h-[3px] w-[3px] rounded-full bg-[#252423]" />
            <div className="ml-[2px] h-[3px] w-[3px] rounded-full bg-[#252423]" />
          </div>
          <div className="mt-[20px] w-[258px] border-t border-[#e1dfdd]" />
          <div className="pl-[17px] pt-[14px] text-[17px] leading-[24px] text-[#605e5c]">Values</div>
          <div className="ml-[6px] mt-[7px] flex h-[41px] w-[255px] items-center border border-dashed border-[#c8c6c4] bg-white pl-[15px] text-[17px] tracking-[-0.2px] text-[#605e5c]">
            Add data fields here
          </div>
          <div className="pl-[17px] pt-[17px] text-[17px] leading-[24px] font-semibold tracking-[-0.2px] text-[#605e5c]">Drill through</div>
          <div className="mt-[13px] flex h-[24px] w-[237px] items-center justify-between pl-[17px] text-[17px] tracking-[-0.2px] text-[#605e5c]">
            Cross-report
            <Toggle />
          </div>
          <div className="mt-[16px] flex h-[24px] w-[237px] items-center justify-between pl-[17px] text-[17px] tracking-[-0.2px] text-[#605e5c]">
            Keep all filters
            <Toggle on />
          </div>
          <div className="absolute right-[1px] top-[510px] h-[170px] w-[7px] rounded-full bg-[#d2d0ce]" />
        </div>

        {/* Data */}
        <div className="relative flex-1">
          <div className="flex h-[58px] items-center justify-between pl-[13px] pr-[10px]">
            <span className="text-[23px] font-semibold tracking-[-0.2px] text-[#252423]">Data</span>
            <DoubleChevron />
          </div>
          <div className="ml-[7px] mt-[11px] flex h-[35px] w-[256px] items-center rounded-[3px] border border-[#c8c6c4] border-b-[#605e5c] bg-white pl-[16px]">
            <Search className="h-[25px] w-[25px]" color="#605e5c" strokeWidth={1.4} />
            <span className="ml-[8px] text-[18px] text-[#605e5c]">Search</span>
          </div>
          <div className="mt-[3px]">
            {fields.map((f) => (
              <FieldRow key={f.name} {...f} />
            ))}
            <div className="flex h-[36px] items-center pl-[17px]">
              <ChevronDown className="h-[24px] w-[24px]" color="#484644" strokeWidth={1.1} />
              <svg viewBox="0 0 18 18" className="ml-[3px] h-[18px] w-[18px]" fill="none" stroke="#323130" strokeWidth={1.3}>
                <rect x={1} y={1} width={16} height={16} rx={2.5} />
                <path d="M1 6.3H17M1 11.7H17M6.3 1V17M11.7 1V17" />
              </svg>
              <span className="ml-[9px] text-[18px] tracking-[-0.4px] text-[#605e5c]">Table</span>
            </div>
            {tableFields.map((f) => (
              <FieldRow key={f.name} {...f} />
            ))}
          </div>
          <div className="absolute right-[5px] top-[189px] h-[531px] w-[11px] bg-[#c8c6c4]" />
        </div>
      </div>

      {/* Status bar */}
      <div className="flex h-[36px] shrink-0 items-center border-b border-black bg-[#f3f2f1] pl-[6px] pr-[25px] text-[16px] text-[#605e5c]">
        <span>Page 1 of 2</span>
        <span className="ml-auto text-[18px] font-bold">-</span>
        <div className="relative ml-[5px] h-[2px] w-[148px] bg-[#605e5c]">
          <div className="absolute -top-[7px] left-[28px] h-[16px] w-[6px] bg-[#605e5c]" />
          <div className="absolute -top-[3px] left-[74px] h-[8px] w-px bg-[#605e5c]" />
        </div>
        <Plus className="ml-[9px] h-[14px] w-[14px]" color="#605e5c" strokeWidth={3} />
        <span className="ml-[19px] text-[#8a8886]">50%</span>
        <svg viewBox="0 0 24 18" className="ml-[27px] h-[18px] w-[24px]" fill="none" stroke="#605e5c" strokeWidth={1.3}>
          <rect x={0.7} y={0.7} width={22.6} height={16.6} stroke="#8a8886" />
          <path d="M4 7V4H8M16 4H20V7M20 11V14H16M8 14H4V11" strokeWidth={1.6} />
        </svg>
      </div>

      {/* Taskbar */}
      <div className="flex flex-1 items-center bg-linear-to-r from-[#d2dbe8] via-[#d5deeb] to-[#dbdcea] text-[#1b1a19]">
        <div className="relative ml-[28px] h-[40px] w-[38px]">
          <svg viewBox="0 0 38 40" className="h-[40px] w-[38px]">
            <path d="M8 34C12 24 18 20 20 16C24 22 26 32 16 38C12 39 8 37 8 34Z" fill="#f29423" />
            <path d="M2 15C2 11 6 10 8 11C10 8 16 9 17 13C20 13 20 18 17 18H4C2 18 2 16 2 15Z" fill="#a9c4ea" />
            <path d="M14 28C14 25 18 24 20 25C22 22 28 23 29 27C33 27 33 32 29 32H16C14 32 14 30 14 28Z" fill="#a9c4ea" />
          </svg>
          <div className="absolute left-[18px] top-0 flex h-[24px] w-[23px] items-center justify-center rounded-full bg-[#c42b1c] text-[14px] text-white">
            1
          </div>
        </div>
        <div className="ml-[10px] w-[500px] text-[16px] leading-[25px]">
          <div>73°F</div>
          <div className="text-[#605e5c]">Partly cloudy</div>
        </div>
        <svg viewBox="0 0 35 35" className="h-[35px] w-[35px]">
          <path d="M0 3L2 1H16V16H0Z" fill="#32bdf5" />
          <path d="M18 1H33L35 3V16H18Z" fill="#2aa8ee" />
          <path d="M0 18H16V34H2L0 32Z" fill="#0f82dc" />
          <path d="M18 18H35V32L33 34H18Z" fill="#0878d8" />
        </svg>
        <div className="relative ml-[22px] flex h-[46px] w-[325px] items-center overflow-hidden rounded-full border-2 border-[#c3cad8] bg-[#f6f7fa] pl-[15px]">
          <Search className="h-[24px] w-[24px]" color="#1b1a19" strokeWidth={2} />
          <span className="ml-[14px] text-[20px] text-[#605e5c]">Search</span>
          <svg viewBox="0 0 74 46" className="absolute right-0 top-0 h-[46px] w-[74px]">
            <path d="M4 46L30 35H72V46Z" fill="#a3c488" />
            <path d="M60 8V24M68 8V24M60 24H68" stroke="#e5c84a" strokeWidth={1.5} fill="none" />
            <path d="M12 6L15 17L22 20L13 23L9 34L7 22L0 19L9 16Z" fill="#2f7fd0" />
            <path d="M12 6L15 17L22 20L8 16Z" fill="#e34850" />
            <ellipse cx={40} cy={22} rx={10.5} ry={17} transform="rotate(20 40 22)" fill="#7c4522" />
            <path d="M36 20L46 10" stroke="#e8dcc8" strokeWidth={1.3} />
          </svg>
        </div>
        {/* Pinned apps */}
        <svg viewBox="0 0 36 36" className="ml-[21px] h-[36px] w-[36px]">
          <rect x={0} y={10} width={28} height={26} rx={2} fill="#2b2b2b" />
          <rect x={9} y={0} width={26} height={26} fill="#f5f5f5" />
          <rect x={9} y={10} width={19} height={16} fill="#a8a8a8" />
        </svg>
        <svg viewBox="0 0 34 36" className="ml-[30px] h-[36px] w-[34px]">
          <path d="M12 1C22 -1 21 10 22 18L12 35C6 36 2 32 1 24C0 14 3 4 12 1Z" fill="#2c9fd6" />
          <path d="M1 24C3 16 10 12 15 16C17 20 14 30 12 35C6 36 2 32 1 24Z" fill="#7ec845" />
          <path d="M12 34C22 36 33 30 33 14C33 6 28 2 24 4C28 12 24 24 12 34Z" fill="#e8588f" />
          <path d="M24 4C28 2 33 6 33 14C33 18 32 20 30 24C24 22 21 14 24 4Z" fill="#a85ae0" />
          <path d="M16 35C24 36 28 30 30 24C26 22 22 24 20 28Z" fill="#f49a4c" />
        </svg>
        <div className="relative ml-[30px] h-[40px] w-[38px]">
          <svg viewBox="0 0 38 40" className="h-[40px] w-[38px]">
            <rect x={16} y={14} width={18} height={22} rx={8} fill="#7b83d8" />
            <circle cx={27} cy={7} r={6} fill="#7b83d8" />
            <rect x={0} y={12} width={18} height={20} fill="#fff" />
            <text x={9} y={28} textAnchor="middle" fontSize={16} fontWeight={700} fill="#4b53bc" fontFamily="Open Sans, sans-serif">
              T
            </text>
          </svg>
          <div className="absolute -top-[2px] right-[-8px] flex h-[24px] w-[24px] items-center justify-center rounded-full bg-[#0f6cbd] text-[14px] text-white">
            1
          </div>
        </div>
        <svg viewBox="0 0 36 36" className="ml-[29px] h-[36px] w-[36px]">
          <path d="M1 18C1 6 12 0 20 0C30 0 36 8 36 16C36 20 32 22 26 22C20 22 28 14 20 10C12 7 4 12 1 18Z" fill="#37c6d0" />
          <path d="M1 18C3 10 12 8 16 12C10 14 8 22 12 28C16 34 26 36 33 28C28 36 18 38 10 34C4 30 0 24 1 18Z" fill="#1a7bc4" />
          <circle cx={10} cy={21} r={5} fill="#a19f9d" />
          <path d="M2 34C2 28 6 26 10 26C14 26 17 28 17 34Z" fill="#a19f9d" />
        </svg>
        <div className="relative ml-[30px] h-[36px] w-[36px]">
          <svg viewBox="0 0 36 36" className="h-[36px] w-[36px]">
            <path d="M0 3C0 2 1 1 2 1H12L16 5H36V10H0Z" fill="#d39e0e" />
            <path d="M0 7H36V34C36 35 35 36 34 36H2C1 36 0 35 0 34Z" fill="#fbd660" />
            <path d="M12 24C12 22 14 21 15 21H21C22 21 24 22 24 24V36H12Z" fill="#1a78c2" />
            <path d="M15 27H21" stroke="#0b3d66" strokeWidth={1.6} />
          </svg>
          <div className="absolute -bottom-[8px] left-[14px] h-[5px] w-[8px] rounded-full bg-[#7a7a7a]" />
        </div>
        <div className="relative ml-[20px] flex h-[58px] w-[56px] items-center justify-center rounded-[5px] bg-[#edf1f8]">
          <svg viewBox="0 0 36 36" className="h-[36px] w-[36px]">
            <rect x={0} y={0} width={36} height={36} fill="#0a78d4" />
            <rect x={19} y={0} width={17} height={36} fill="#d4a016" />
            <rect x={32} y={0} width={4} height={36} fill="#6c5320" />
            <rect x={13} y={14} width={12} height={22} fill="#f2c811" />
            <rect x={5} y={22} width={12} height={14} fill="#fae17d" />
          </svg>
          <div className="absolute bottom-[3px] left-[16px] h-[6px] w-[24px] rounded-full bg-[#0078d4]" />
        </div>
        <ChevronUp className="ml-[259px] h-[24px] w-[24px]" strokeWidth={1.5} />
        <svg viewBox="0 0 24 22" className="ml-[24px] h-[22px] w-[24px]" fill="none" stroke="#1b1a19" strokeWidth={1.7}>
          <path d="M1 8C7 1 17 1 23 8M5 12C9 7 15 7 19 12M8.5 15.5C11 13 13 13 15.5 15.5" />
          <circle cx={12} cy={19} r={1.5} fill="#1b1a19" />
        </svg>
        <svg viewBox="0 0 24 22" className="ml-[12px] h-[22px] w-[24px]" fill="none" stroke="#1b1a19" strokeWidth={1.3}>
          <path d="M2 7H6L12 2V20L6 15H2Z" />
          <path d="M15 7C17 9 17 13 15 15M18 4C21 8 21 14 18 18" />
        </svg>
        <svg viewBox="0 0 26 20" className="ml-[13px] h-[20px] w-[26px]" fill="none" stroke="#1b1a19" strokeWidth={1.5}>
          <rect x={1} y={3} width={21} height={14} rx={2.5} />
          <rect x={4} y={6} width={15} height={8} fill="#1b1a19" />
          <path d="M24 7V13" />
        </svg>
        <div className="ml-[13px] w-[82px] text-right text-[16px] leading-[25px] tracking-[0.2px]">
          <div className="whitespace-nowrap">1:16 AM</div>
          <div className="whitespace-nowrap">9/5/2024</div>
        </div>
        <svg viewBox="0 0 22 28" className="ml-[12px] h-[28px] w-[22px]" fill="#0f4a9a">
          <path d="M11 0C16 0 17 6 18 12C18 16 21 18 21 21H1C1 18 4 16 4 12C5 6 6 0 11 0Z" />
          <path d="M8 24H14L11 27Z" />
        </svg>
      </div>
    </div>
  );
}
